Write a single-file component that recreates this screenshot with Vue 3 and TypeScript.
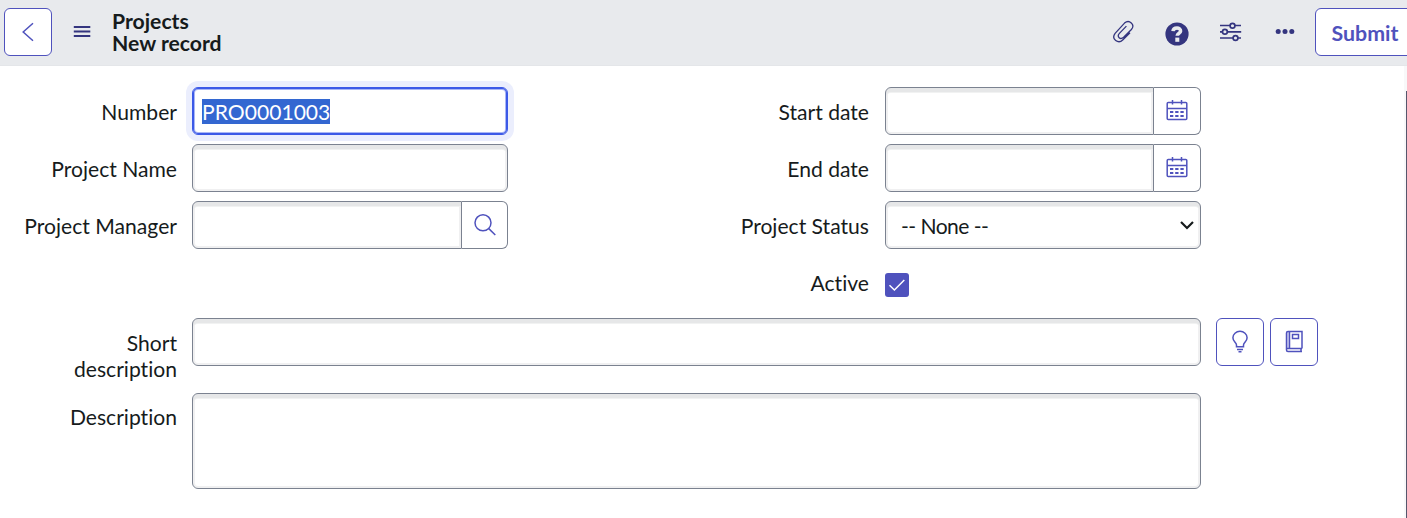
<script setup lang="ts">
import { ref } from 'vue'

const recordNumber = ref('PRO0001003')
const active = ref(true)
const dateFields: string[] = ['Start date', 'End date']
const dayColumns: number[] = [5, 10.2, 15.4]
const dayRows: number[] = [12, 16]
</script>

<template>
  <div class="page">
    <header class="bar">
      <button class="btn back" aria-label="Back">
        <svg width="48" height="48" viewBox="0 0 48 48"><path d="M29 15.2 19.2 24 29 32.8" /></svg>
      </button>
      <svg class="menu" width="18" height="12" viewBox="0 0 18 12"><path d="M.8 1h16.5M.8 5.500h16.5M.8 10h16.5" /></svg>
      <h1 class="title"><span>Projects</span><span>New record</span></h1>
      <nav class="tools">
        <svg class="tool clip" width="24" height="24" viewBox="0 0 24 24">
          <path d="M19 12.800 11.700 20C7.400 24.200-.2 19.200 4.100 13.400L13.500 3.100C18.300-1 24.500 4.700 20.400 9.500L12.600 17.300C9.200 20.300 5.500 16.600 8.400 13.400L15.400 6.100" />
        </svg>
        <svg class="tool help" width="24" height="24" viewBox="0 0 24 24">
          <circle cx="12" cy="12" r="11.6" />
          <path d="M8 9.200C8.300 4.900 15.900 5 15.600 9.100 15.500 11.300 12.200 11.200 12.200 13.800" />
          <rect x="10.300" y="15.600" width="4" height="4.200" />
        </svg>
        <svg class="tool sliders" width="24" height="24" viewBox="0 0 24 24">
          <path d="M1 5.500h10M16 5.500h6M1 11.800h2.400M8.400 11.800h13.800M1 18h13M19 18h3" />
          <circle cx="13.500" cy="5.700" r="2.400" /><circle cx="5.900" cy="11.800" r="2.400" /><circle cx="16.500" cy="18" r="2.400" />
        </svg>
        <svg class="tool dots" width="24" height="24" viewBox="0 0 24 24">
          <circle cx="5.200" cy="11.500" r="2.500" /><circle cx="12" cy="11.500" r="2.500" /><circle cx="18.800" cy="11.500" r="2.500" />
        </svg>
      </nav>
      <button class="btn submit">Submit</button>
    </header>

    <main class="form">
      <div class="columns">
        <section class="column">
          <div class="row">
            <label>Number</label>
            <div class="field focused"><span class="selected">{{ recordNumber }}</span></div>
          </div>
          <div class="row">
            <label>Project Name</label>
            <div class="field"></div>
          </div>
          <div class="row">
            <label>Project Manager</label>
            <div class="group">
              <div class="field"></div>
              <button class="addon lookup" aria-label="Look up">
                <svg width="24" height="24" viewBox="0 0 24 24"><circle cx="10" cy="9.800" r="8" /><path d="m15.800 15.600 6.500 6.400" /></svg>
              </button>
            </div>
          </div>
        </section>

        <section class="column right">
          <div v-for="name in dateFields" :key="name" class="row">
            <label>{{ name }}</label>
            <div class="group">
              <div class="field"></div>
              <button class="addon" aria-label="Pick date">
                <svg class="calendar" width="24" height="24" viewBox="0 0 24 24">
                  <path d="M3.200 3.500h17.600q1 0 1 1v15.100q0 1-1 1H3.200q-1 0-1-1V4.500q0-1 1-1ZM2.200 9.500h19.600M7.500 1v4.500M16.500 1v4.500" />
                  <template v-for="y in dayRows" :key="y">
                    <rect v-for="x in dayColumns" :key="x" :x="x" :y="y" width="3.300" height="2" />
                  </template>
                </svg>
              </button>
            </div>
          </div>
          <div class="row">
            <label>Project Status</label>
            <div class="field select">
              <span>-- None --</span>
              <svg width="14" height="9" viewBox="0 0 14 9"><path d="m1 1 6 6 6-6" /></svg>
            </div>
          </div>
          <div class="row">
            <label>Active</label>
            <button class="check" role="checkbox" :aria-checked="active" @click="active = !active">
              <svg v-if="active" width="24" height="24" viewBox="0 0 24 24"><path d="m4.500 12.300 4.900 4.700L19.300 7" /></svg>
            </button>
          </div>
        </section>
      </div>

      <div class="row wide">
        <label>Short description</label>
        <div class="field"></div>
        <div class="actions">
          <button class="btn" aria-label="Suggestions">
            <svg width="48" height="48" viewBox="0 0 48 48">
              <path d="M20.500 28.700v-1.700c0-2.200-3.600-3.600-3.600-7.200a7.100 6.500 0 0 1 14.200 0c0 3.600-3.600 5-3.600 7.200v1.700ZM21 31.500h6M22.500 33.800h3" />
            </svg>
          </button>
          <button class="btn" aria-label="Knowledge">
            <svg width="48" height="48" viewBox="0 0 48 48">
              <path class="spine" d="M17 14h3v16h-3Z" />
              <path d="M32 30.500V13.500H18q-1.500 0-1.500 1.500v17q0 1.500 1.500 1.500h14M19.500 13.500v17M16.500 30.500H32M31 30.500v3M22.500 16.500h6v4h-6Z" />
            </svg>
          </button>
        </div>
      </div>
      <div class="row wide tall">
        <label>Description</label>
        <div class="field area"></div>
      </div>
    </main>
    <div class="scroll"></div>
  </div>
</template>

<style>
body {
  margin: 0;
  overflow: hidden;
}
</style>

<style scoped>
* {
  box-sizing: border-box;
}
.page {
  position: relative;
  width: 1407px;
  height: 518px;
  overflow: hidden;
  background: #fff;
  color: #161b1c;
  font: 21.12px/26px Lato, sans-serif;
  font-variant-ligatures: none;
}
svg {
  display: block;
  flex: none;
  fill: none;
  stroke: #4f52bd;
  stroke-width: 1.5;
}
button {
  padding: 0;
  font: inherit;
  font-variant-ligatures: none;
}
.bar {
  display: flex;
  height: 66px;
  padding: 8px 0 0 4px;
  background: #e8eaed;
  border-bottom: 1px solid #e4e6e9;
}
.btn {
  display: flex;
  flex: none;
  align-items: center;
  justify-content: center;
  width: 48px;
  height: 48px;
  border: 1px solid #4f52bd;
  border-radius: 6px;
  background: #fff;
  color: #4f52bd;
}
.menu {
  margin: 18px 0 0 21px;
  stroke: #34357f;
  stroke-width: 1.8;
}
.title {
  display: flex;
  flex: none;
  flex-direction: column;
  width: 200px;
  margin: 2px 0 0 21px;
  font-size: 21.2px;
  line-height: 22px;
  font-weight: 700;
}
.tools {
  display: flex;
  flex: none;
  gap: 30px;
  margin: 12px 0 0 799px;
}
.tool {
  stroke: #34357f;
}
.clip {
  stroke-width: 1.3;
}
.help {
  margin-top: 2px;
}
.help circle,
.dots circle {
  fill: #34357f;
  stroke: none;
}
.help path {
  stroke: #e8eaed;
  stroke-width: 3.5;
}
.help rect {
  fill: #e8eaed;
  stroke: none;
}
.sliders {
  stroke-width: 1.7;
}
.submit {
  width: 100px;
  margin-left: 18px;
  padding-top: 2px;
  font-size: 21.33px;
  font-weight: 700;
}
.form {
  padding-top: 21px;
}
.columns {
  display: flex;
  gap: 192px;
}
.column {
  display: flex;
  flex-direction: column;
  gap: 9px;
  width: 508px;
}
.row {
  display: flex;
  align-items: flex-start;
  gap: 15px;
  height: 48px;
}
.right {
  width: 501px;
}
.right .row {
  gap: 16px;
}
label {
  flex: none;
  width: 177px;
  padding: 12px 0 0 20px;
  text-align: right;
}
.right label {
  width: 169px;
}
.group {
  display: flex;
  flex: 1;
}
.field {
  flex: 1;
  height: 48px;
  border: 1px solid #7b8290;
  border-radius: 6px;
  background: #fff;
  box-shadow: inset 0 4px 0 #e6e7e8, inset 0 0 0 2px #f0f0f1, inset 0 5px 0 #f1f2f2;
}
.group .field {
  border-radius: 6px 0 0 6px;
}
.addon {
  display: flex;
  justify-content: center;
  width: 47px;
  height: 48px;
  padding-top: 11px;
  border: 1px solid #7b8290;
  border-left: 0;
  border-radius: 0 6px 6px 0;
  background: #fff;
}
.lookup {
  width: 46px;
}
.calendar rect {
  fill: #4f52bd;
  stroke: none;
}
.focused {
  padding: 11px 0 0 9px;
  border: 1px solid #3c59e7;
  box-shadow: inset 0 0 0 1px #3c59e7, inset 0 0 0 2px #a9b6f5, 0 0 0 6px #ebeefd;
}
.selected {
  display: inline-block;
  height: 25px;
  background: #3367d1;
  color: #fff;
  line-height: 26px;
}
.select {
  display: flex;
  justify-content: space-between;
  padding: 11px 6px 0 15px;
}
.select span {
  letter-spacing: -0.55px;
}
.select svg {
  margin-top: 8px;
  stroke: #161b1c;
  stroke-width: 2.2;
}
.check {
  width: 24px;
  height: 24px;
  margin-top: 15px;
  border: 0;
  border-radius: 3px;
  background: #4f52bd;
}
.check svg {
  stroke: #fff;
}
.wide {
  margin-top: 12px;
}
.wide .field {
  flex: none;
  width: 1009px;
}
.actions {
  display: flex;
  gap: 6px;
}
.spine {
  fill: #cfd0f2;
  stroke: none;
}
.wide.tall {
  height: 96px;
  margin-top: 27px;
}
.tall label {
  padding-top: 11px;
}
.wide .area {
  height: 96px;
}
.scroll {
  position: absolute;
  top: 66px;
  right: 0;
  width: 3px;
  height: 452px;
  background: linear-gradient(#55566c, #55566c) 2px 25px / 1px 427px no-repeat #f8f8f9;
}
</style>
